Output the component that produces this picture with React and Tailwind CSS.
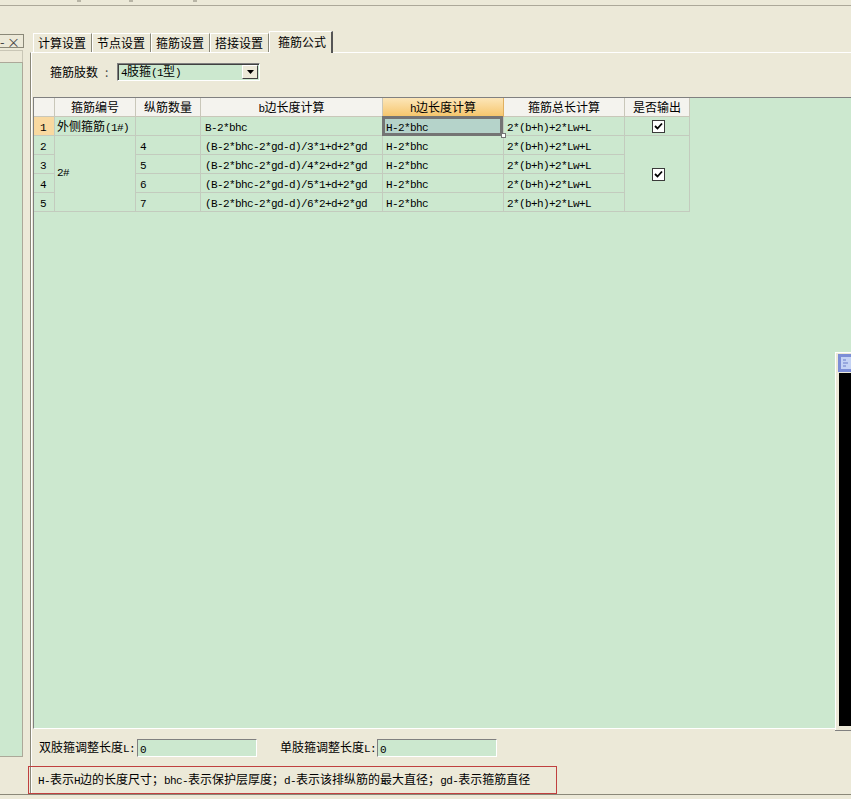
import React from "react";

// latin runs are narrower (SimSun half-width look)
const Mix = ({ text }) =>
  text
    .split(/([\x20-\x7e]+)/)
    .filter(Boolean)
    .map((s, i) =>
      /^[\x20-\x7e]+$/.test(s) ? (
        <span key={i} className="font-['Liberation_Mono',monospace] text-[11px] tracking-[-0.6px]">
          {s}
        </span>
      ) : (
        <span key={i}>{s}</span>
      )
    );

const Check = () => (
  <div className="w-[13px] h-[13px] bg-white border border-[#3a3a3a] flex items-center justify-center">
    <svg width="9" height="9" viewBox="0 0 9 9">
      <path d="M1 4 L3.5 6.5 L8 1.5" stroke="#000" strokeWidth="1.8" fill="none" />
    </svg>
  </div>
);

const tabs = ["计算设置", "节点设置", "箍筋设置", "搭接设置"];

const headers = ["箍筋编号", "纵筋数量", "b边长度计算", "h边长度计算", "箍筋总长计算", "是否输出"];

const bForms = [
  "(B-2*bhc-2*gd-d)/3*1+d+2*gd",
  "(B-2*bhc-2*gd-d)/4*2+d+2*gd",
  "(B-2*bhc-2*gd-d)/5*1+d+2*gd",
  "(B-2*bhc-2*gd-d)/6*2+d+2*gd",
];

const cell = "border-r border-b border-[#c3cbbe] h-[19px] leading-[18px] whitespace-nowrap overflow-hidden";
const hcell = "border-r border-b border-[#c9c7b9] h-[19px] leading-[18px] whitespace-nowrap text-center bg-[#f4f3ee]";

const Grid = () => (
  <div className="grid grid-cols-[21px_81px_65px_182px_121px_121px_65px] w-fit">
    <div className={hcell}></div>
    {headers.map((h, i) =>
      i === 3 ? (
        <div key={h} className="border-r border-b border-[#e0b060] h-[19px] leading-[18px] text-center bg-gradient-to-b from-[#fce6b8] to-[#f6c66c]">
          <Mix text={h} />
        </div>
      ) : (
        <div key={h} className={hcell}>
          <Mix text={h} />
        </div>
      )
    )}

    {/* row 1 */}
    <div className={`${cell} bg-[#f9d9a0] pl-[6px]`}>
      <Mix text="1" />
    </div>
    <div className={`${cell} pl-[2px]`}>
      <Mix text="外侧箍筋(1#)" />
    </div>
    <div className={cell}></div>
    <div className={`${cell} pl-[4px]`}>
      <Mix text="B-2*bhc" />
    </div>
    <div className={`${cell} relative overflow-visible bg-[#b5d3ca] pl-[3px]`}>
      <Mix text="H-2*bhc" />
      <div className="absolute -top-[1px] -left-[1px] right-0 -bottom-[1px] border-[3px] border-[#747474]"></div>
      <div className="absolute -bottom-[3px] -right-[3px] w-[5px] h-[5px] bg-white border border-[#747474]"></div>
    </div>
    <div className={`${cell} pl-[3px]`}>
      <Mix text="2*(b+h)+2*Lw+L" />
    </div>
    <div className={`${cell} flex items-center justify-center pl-[2px]`}>
      <Check />
    </div>

    {bForms.map((f, i) => (
      <React.Fragment key={i}>
        <div className={`${cell} pl-[6px]`}>
          <Mix text={String(i + 2)} />
        </div>
        {i === 0 && (
          <div className="row-span-4 border-r border-b border-[#c3cbbe] flex items-center pl-[2px]">
            <Mix text="2#" />
          </div>
        )}
        <div className={`${cell} pl-[4px]`}>
          <Mix text={String(i + 4)} />
        </div>
        <div className={`${cell} pl-[4px]`}>
          <Mix text={f} />
        </div>
        <div className={`${cell} pl-[3px]`}>
          <Mix text="H-2*bhc" />
        </div>
        <div className={`${cell} pl-[3px]`}>
          <Mix text="2*(b+h)+2*Lw+L" />
        </div>
        {i === 0 && (
          <div className="row-span-4 border-r border-b border-[#c3cbbe] flex items-center justify-center pl-[2px] pt-[2px]">
            <Check />
          </div>
        )}
      </React.Fragment>
    ))}
  </div>
);

const App = () => {
  return (
    <div className="relative w-[851px] h-[799px] overflow-hidden bg-[#ece9d8] text-[12px] text-black font-['Noto_Sans_CJK_SC',sans-serif]">
      {/* top strip */}
      <div className="relative h-[6px] border-b border-[#aca899]">
        <div className="absolute top-0 left-[77px] w-[4px] h-[2px] bg-[#b8b5a6]"></div>
        <div className="absolute top-0 left-[129px] w-[4px] h-[2px] bg-[#b8b5a6]"></div>
        <div className="absolute top-0 left-[193px] w-[4px] h-[2px] bg-[#b8b5a6]"></div>
      </div>

      <div className="flex h-[788px]">
        {/* left dock */}
        <div className="w-[30px] shrink-0 flex flex-col">
          <div className="mt-[28px] w-[24px] h-[14px] border border-l-0 border-[#8a8878] flex items-center text-[13px] leading-none text-[#444]">
            <span className="ml-0">-</span>
            <span className="ml-auto mr-[3px]">×</span>
          </div>
          <div className="mt-[2px] h-[12px] border-t border-[#c9c6b6] w-[23px] border-r"></div>
          <div className="w-[23px] h-[694px] bg-[#cce8cf] border-t border-r border-[#aca899]"></div>
          <div className="w-[23px] border-t border-[#aca899] flex-1"></div>
        </div>

        {/* right side */}
        <div className="w-[830px] shrink-0 flex flex-col">
          <div className="h-[46px] flex items-end pl-[3px]">
            {tabs.map((t) => (
              <div
                key={t}
                className="w-[59px] h-[19px] pl-[4px] leading-[18px] border-t border-l border-white border-r border-r-[#8a8878]"
              >
                {t}
              </div>
            ))}
            <div className="relative z-10 w-[64px] h-[22px] -mb-[1px] pl-[8px] leading-[19px] bg-[#ece9d8] border-t border-l border-white border-r-2 border-r-[#555]">
              箍筋公式
            </div>
          </div>

          <div className="flex-1 flex flex-col border-t border-l border-t-white border-l-[#8a8878] shadow-[inset_1px_0_0_#fff]">
            {/* combo */}
            <div className="flex items-center mt-[10px] h-[18px]">
              <span className="ml-[19px] w-[67px] whitespace-nowrap">
                箍筋肢数<span className="ml-[7px] text-[#444]">:</span>
              </span>
              <div className="w-[143px] h-[18px] bg-[#cce8cf] border border-t-[#808080] border-l-[#808080] border-b-white border-r-white shadow-[inset_1px_1px_0_#404040] flex items-center">
                <span className="pl-[3px] leading-[16px]">
                  <Mix text="4肢箍(1型)" />
                </span>
                <div className="ml-auto mr-[1px] w-[16px] h-[14px] bg-[#ece9d8] border border-t-white border-l-white border-b-[#404040] border-r-[#404040] flex items-center justify-center">
                  <svg width="7" height="4" viewBox="0 0 7 4">
                    <path d="M0 0 H7 L3.5 4 Z" fill="#000" />
                  </svg>
                </div>
              </div>
            </div>

            {/* grid */}
            <div className="mt-[16px] ml-[2px] h-[632px] bg-[#cce8cf] border-t border-l border-[#808080] border-b border-b-white overflow-hidden">
              <Grid />
            </div>

            {/* inputs */}
            <div className="flex items-center mt-[10px] h-[18px]">
              <span className="ml-[8px] w-[98px] shrink-0 whitespace-nowrap">
                <Mix text="双肢箍调整长度L:" />
              </span>
              <div className="w-[120px] shrink-0 h-[18px] bg-[#cce8cf] border border-t-[#808080] border-l-[#808080] border-b-white border-r-white pl-[2px] leading-[16px]">
                <Mix text="0" />
              </div>
              <span className="ml-[23px] w-[97px] shrink-0 whitespace-nowrap">
                <Mix text="单肢箍调整长度L:" />
              </span>
              <div className="w-[120px] shrink-0 h-[18px] bg-[#cce8cf] border border-t-[#808080] border-l-[#808080] border-b-white border-r-white pl-[2px] leading-[16px]">
                <Mix text="0" />
              </div>
            </div>

            {/* note */}
            <div className="mt-[9px] -ml-[3px] w-[529px] h-[28px] border border-[#c0403f] pl-[9px] flex items-center">
              <span className="leading-[16px] whitespace-nowrap">
                <Mix text="H-表示H边的长度尺寸；bhc-表示保护层厚度；d-表示该排纵筋的最大直径；gd-表示箍筋直径" />
              </span>
            </div>
          </div>
        </div>
      </div>
      <div className="border-t border-[#8a8878] h-[5px]"></div>

      {/* floating window at the right edge */}
      <div className="absolute left-[835px] top-[352px] w-[30px] h-[378px] bg-[#ece9d8] border-l border-t border-white shadow-[0_1px_0_#808080] pt-[1px] pl-[2px]">
        <div className="h-[18px] bg-[#7c8ed6] flex items-center pl-[2px]">
          <svg width="12" height="14" viewBox="0 0 12 14">
            <rect x="1" y="1" width="10" height="12" fill="#c4d2f4" />
            <path d="M3 4 H6 M3 7 H8 M3 10 H6" stroke="#6a7cc8" strokeWidth="1" />
          </svg>
        </div>
        <div className="mt-[1px] ml-[1px] h-[353px] bg-black"></div>
      </div>
    </div>
  );
};

export default App;
